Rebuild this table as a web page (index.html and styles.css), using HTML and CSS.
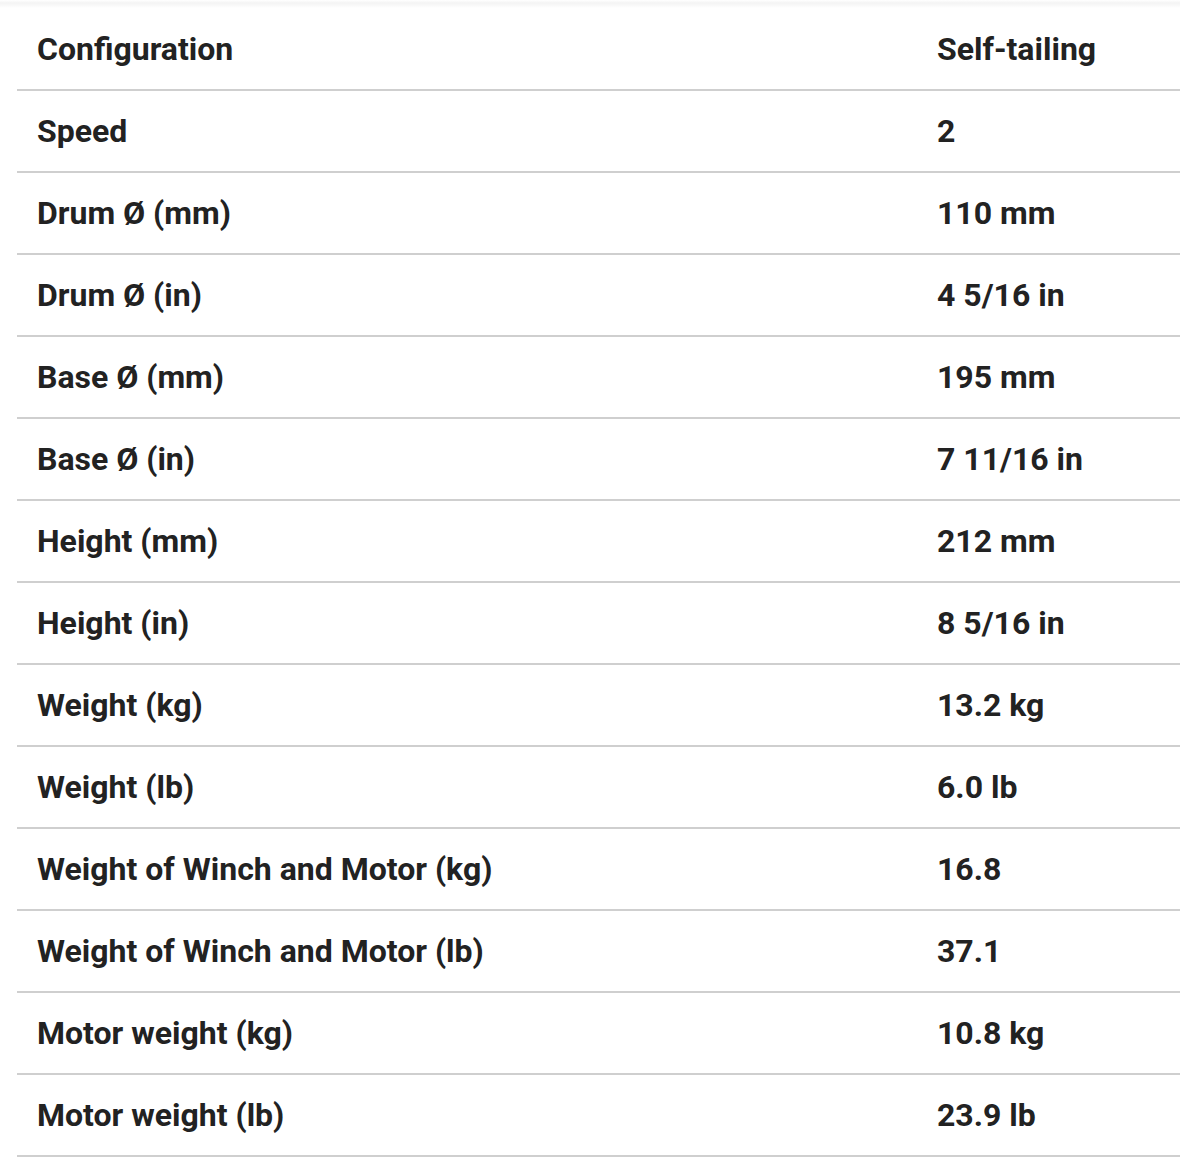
FILE: index.html
```html
<!DOCTYPE html>
<html>
<head>
<meta charset="utf-8">
<link rel="stylesheet" href="styles.css">
</head>
<body>
<div class="shade"></div>
<table class="specs">
<tbody>
<tr><td>Configuration</td><td>Self-tailing</td></tr>
<tr><td>Speed</td><td>2</td></tr>
<tr><td>Drum Ø (mm)</td><td>110 mm</td></tr>
<tr><td>Drum Ø (in)</td><td>4 5/16 in</td></tr>
<tr><td>Base Ø (mm)</td><td>195 mm</td></tr>
<tr><td>Base Ø (in)</td><td>7 11/16 in</td></tr>
<tr><td>Height (mm)</td><td>212 mm</td></tr>
<tr><td>Height (in)</td><td>8 5/16 in</td></tr>
<tr><td>Weight (kg)</td><td>13.2 kg</td></tr>
<tr><td>Weight (lb)</td><td>6.0 lb</td></tr>
<tr><td>Weight of Winch and Motor (kg)</td><td>16.8</td></tr>
<tr><td>Weight of Winch and Motor (lb)</td><td>37.1</td></tr>
<tr><td>Motor weight (kg)</td><td>10.8 kg</td></tr>
<tr><td>Motor weight (lb)</td><td>23.9 lb</td></tr>
</tbody>
</table>
</body>
</html>
```
FILE: styles.css
```css
html, body {
  margin: 0;
  padding: 0;
  background: #fff;
}
body {
  font-family: Roboto, "Liberation Sans", sans-serif;
  color: #222;
}
.shade {
  height: 8px;
  background: linear-gradient(to bottom, #fff 0, #f4f4f4 3px, #fafafa 6px, #fff 8px);
}
.specs {
  margin-left: 17px;
  width: 1163px;
  border-collapse: collapse;
}
.specs td {
  height: 82px;
  padding: 0 0 0 20px;
  border-bottom: 2px solid #cfcfcf;
  font-size: 32px;
  font-weight: 700;
  vertical-align: middle;
  box-sizing: border-box;
  white-space: nowrap;
}
.specs td:first-child {
  width: 900px;
}
```
